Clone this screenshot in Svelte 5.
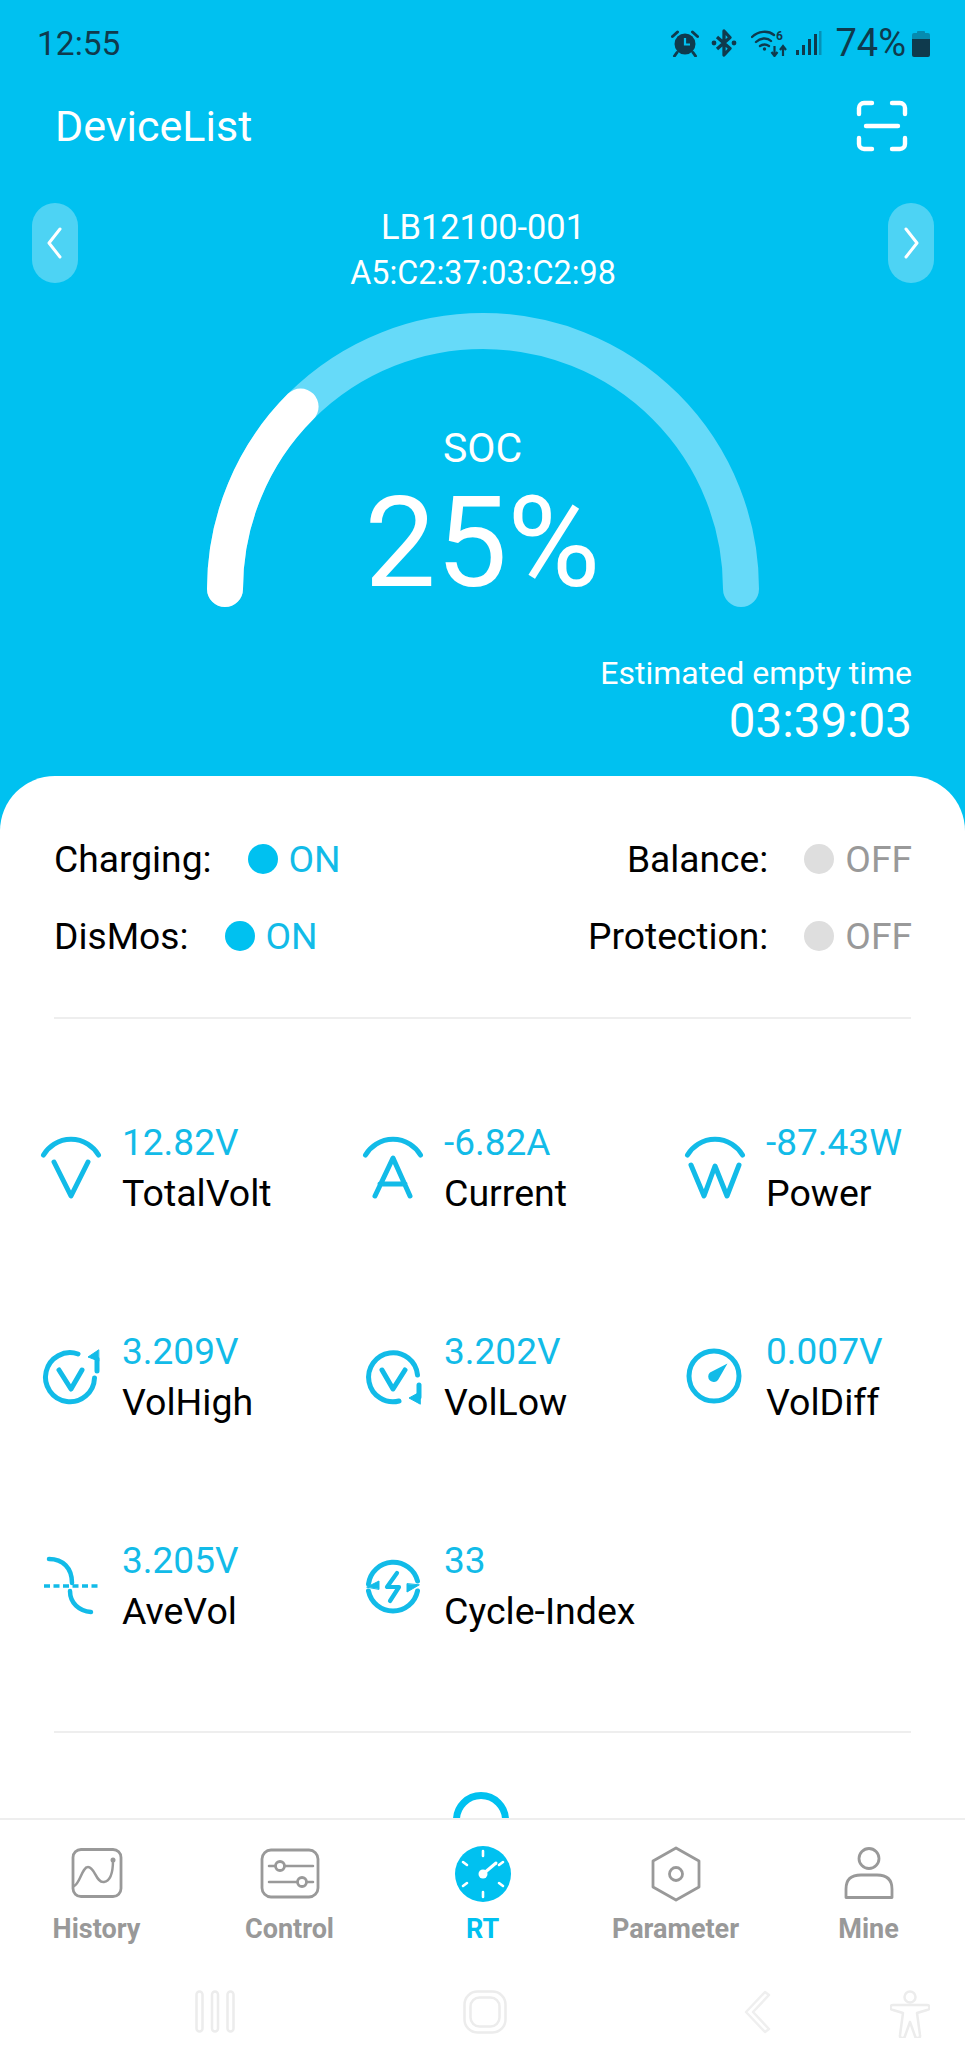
<script>
  const rows = [
    [{ k: 'v', val: '12.82V', label: 'TotalVolt' }, { k: 'a', val: '-6.82A', label: 'Current' }, { k: 'w', val: '-87.43W', label: 'Power' }],
    [{ k: 'high', val: '3.209V', label: 'VolHigh' }, { k: 'low', val: '3.202V', label: 'VolLow' }, { k: 'diff', val: '0.007V', label: 'VolDiff' }],
    [{ k: 'ave', val: '3.205V', label: 'AveVol' }, { k: 'cycle', val: '33', label: 'Cycle-Index' }]
  ];
  const flags = [
    [{ label: 'Charging:', on: true }, { label: 'Balance:', on: false }],
    [{ label: 'DisMos:', on: true }, { label: 'Protection:', on: false }]
  ];
  const tabs = [
    { k: 'history', label: 'History' },
    { k: 'control', label: 'Control' },
    { k: 'rt', label: 'RT', active: true },
    { k: 'param', label: 'Parameter' },
    { k: 'mine', label: 'Mine' }
  ];
</script>

<div class="app">
  <header class="head">
    <div class="status">
      <span class="time">12:55</span>
      <div class="sys">
        <svg class="i-alarm" width="28" height="27" viewBox="0 0 28 27">
          <circle cx="14" cy="14" r="10.5" fill="#0f3a4d"/>
          <path d="M14 8v6.5h5" fill="none" stroke="#00c1f0" stroke-width="2.2"/>
          <path d="M1.5 6.5 6.5 2M26.5 6.5 21.5 2M6 22.5 3.5 26M22 22.5 24.5 26" stroke="#0f3a4d" stroke-width="3" stroke-linecap="round"/>
        </svg>
        <svg class="i-bt" width="26" height="28" viewBox="0 0 26 28">
          <path d="M6 8 19 19.5 13 26V2l6 6.5L6 20" fill="none" stroke="#0f3a4d" stroke-width="3.300" stroke-linejoin="round"/>
          <circle cx="3" cy="14" r="2.4" fill="#0f3a4d"/><circle cx="23" cy="14" r="2.4" fill="#0f3a4d"/>
        </svg>
        <svg class="i-wifi" width="37" height="28" viewBox="0 0 37 28">
          <path d="M1 8C7 2 17 1 23 6M5 13c4-4 11-5 15-1M9 17c3-2 6-2 9 0" fill="none" stroke="#0f3a4d" stroke-width="2.4" stroke-linecap="round"/>
          <circle cx="13.500" cy="20" r="1.700" fill="#0f3a4d"/>
          <path d="M23.500 17v9M20.500 23l3 4 3-4M32 27v-9M29 21l3-4 3 4" fill="none" stroke="#0f3a4d" stroke-width="2.200"/>
          <text x="25" y="11" class="six">6</text>
        </svg>
        <svg class="i-sig" width="26" height="26" viewBox="0 0 26 26">
          <rect x="0" y="20" width="3" height="5" fill="#0f3a4d"/>
          <rect x="6" y="15" width="3" height="10" fill="#0f3a4d"/>
          <rect x="12" y="9" width="3" height="16" fill="#0f3a4d"/>
          <rect x="18" y="4" width="3" height="21" fill="#0f3a4d"/>
          <rect x="23" y="1" width="2.500" height="24" fill="#0f3a4d" opacity="0.35"/>
        </svg>
        <span class="pct">74%</span>
        <svg class="i-bat" width="18" height="28" viewBox="0 0 18 28">
          <path d="M5 3a1 1 0 0 1 1-1h6a1 1 0 0 1 1 1v1h3a2 2 0 0 1 2 2v4H0V6a2 2 0 0 1 2-2h3z" fill="#0f3a4d" opacity="0.4"/>
          <path d="M0 10h18v16a2 2 0 0 1-2 2H2a2 2 0 0 1-2-2z" fill="#0f3a4d"/>
        </svg>
      </div>
    </div>

    <div class="titlebar">
      <span class="title">DeviceList</span>
      <svg width="52" height="52" viewBox="0 0 52 52" fill="none" stroke="#fff" stroke-width="4.400" stroke-linecap="round">
        <path d="M3 14V8a5 5 0 0 1 5-5h8M36 3h8a5 5 0 0 1 5 5v6M3 38v6a5 5 0 0 0 5 5h8M36 49h8a5 5 0 0 0 5-5v-6M10 26h32"/>
      </svg>
    </div>

    <div class="device">
      <button class="pager" aria-label="Previous">
        <svg width="20" height="32" viewBox="0 0 20 32" fill="none" stroke="#fff" stroke-width="3" stroke-linecap="round" stroke-linejoin="round"><path d="M15 2 4 16l11 14"/></svg>
      </button>
      <div class="devname">
        <div class="dn">LB12100-001</div>
        <div class="mac">A5:C2:37:03:C2:98</div>
      </div>
      <button class="pager" aria-label="Next">
        <svg width="20" height="32" viewBox="0 0 20 32" fill="none" stroke="#fff" stroke-width="3" stroke-linecap="round" stroke-linejoin="round"><path d="M5 2l11 14L5 30"/></svg>
      </button>
    </div>

    <div class="gauge">
      <svg width="560" height="310" viewBox="0 0 560 310" fill="none" stroke-width="36" stroke-linecap="round">
        <path d="M22 284A258 258 0 0 1 538 284" stroke="#66daf9"/>
        <path d="M22 284A258 258 0 0 1 97.600 101.600" stroke="#fff"/>
      </svg>
      <div class="gtext">
        <div class="soc">SOC</div>
        <div class="big">25%</div>
      </div>
    </div>

    <div class="estimate">
      <div class="est1">Estimated empty time</div>
      <div class="est2">03:39:03</div>
    </div>
  </header>

  <main class="card">
    <div class="scroll">
      <section class="flags">
        {#each flags as row}
          <div class="flagrow">
            {#each row as f}
              <div class="flag">
                <span class="flabel">{f.label}</span>
                <span class="dot" class:on={f.on}></span>
                <span class="fstate" class:on={f.on}>{f.on ? 'ON' : 'OFF'}</span>
              </div>
            {/each}
          </div>
        {/each}
      </section>
      <div class="rule first"></div>
      <section class="metrics">
        {#each rows as row}
          {#each row as m}
            <div class="metric">
              <svg class="micon" width="60" height="60" viewBox="0 0 60 60" fill="none" stroke="#12bbe8" stroke-width="5" stroke-linecap="round" stroke-linejoin="round">
                {#if m.k === 'v'}
                  <path d="M2.500 17A32 32 0 0 1 57.500 17"/><path d="M13 24l17 34 17-34"/>
                {:else if m.k === 'a'}
                  <path d="M2.500 17A32 32 0 0 1 57.500 17"/><path d="M12 58 30 20l17 38M17 46h25"/>
                {:else if m.k === 'w'}
                  <path d="M2.500 17A32 32 0 0 1 57.500 17"/><path d="M6 27l13 31 11-30 12 30 12-31"/>
                {:else if m.k === 'high'}
                  <path d="M37 7A24.500 24.500 0 1 0 53.500 31"/><path d="M18 23l12 19 11-19"/><path d="M56 12v12"/>
                  <path d="M57.500 3 47 10l10.500 4z" fill="#12bbe8" stroke-width="1"/>
                {:else if m.k === 'low'}
                  <path d="M54.500 28A24.500 24.500 0 1 0 36 54"/><path d="M19 23l11 19 12-19"/><path d="M56 38v12"/>
                  <path d="M57 57 46 51l11-6z" fill="#12bbe8" stroke-width="1"/>
                {:else if m.k === 'diff'}
                  <circle cx="29" cy="29" r="25"/>
                  <path d="M42.500 16.500 33 33a5.500 5.500 0 1 1-8-7.500z" fill="#12bbe8" stroke="none"/>
                {:else if m.k === 'ave'}
                  <path d="M8 3c14 0 23 9 23 24M29 35c0 12 9 20 21 21" stroke-width="4.500"/>
                  <path d="M3 30h54" stroke-width="3.500" stroke-dasharray="6 3.500" stroke-linecap="butt"/>
                {:else if m.k === 'cycle'}
                  <path d="M5.500 28A25 25 0 0 1 54.500 25M54.500 35A25 25 0 0 1 5.500 35"/>
                  <path d="M4 31l12-6v8zM56 29l-12 7v-8z" fill="#12bbe8" stroke-width="1"/>
                  <path d="M34 17 24 31h12l-9 14" stroke-width="4.200"/>
                {/if}
              </svg>
              <div class="mtext">
                <div class="mval">{m.val}</div>
                <div class="mlabel">{m.label}</div>
              </div>
            </div>
          {/each}
        {/each}
      </section>
      <div class="rule"></div>
      <div class="peek"></div>
    </div>

    <nav class="tabs">
      {#each tabs as t}
        <div class="tab" class:active={t.active}>
          <svg width="60" height="58" viewBox="0 0 60 58" fill="none" stroke="#999" stroke-width="2.800" stroke-linecap="round" stroke-linejoin="round">
            {#if t.k === 'history'}
              <rect x="6" y="4.500" width="48" height="47" rx="8"/>
              <path d="M7 41c6-2 8-19 14-19 7 0 8 16 16 15 7-1 9-12 9-22" stroke-width="2.500"/>
              <circle cx="46" cy="15" r="2.500" fill="#999" stroke="none"/>
            {:else if t.k === 'control'}
              <rect x="2" y="5" width="56" height="47" rx="9"/>
              <path d="M9 21h44M9 37h44" stroke-width="2.500"/>
              <circle cx="20" cy="21" r="4.500" fill="#fff"/><circle cx="42" cy="37" r="4.500" fill="#fff"/>
            {:else if t.k === 'rt'}
              <circle cx="30" cy="29" r="28" fill="#00c1f0" stroke="none"/>
              <path d="M30 6v5M30 47v5M10 17l4 3M10 41l4-3M50 17l-4 3M50 41l-4-3" stroke="#fff" stroke-width="2.600"/>
              <path d="M30 29 43 18" stroke="#fff" stroke-width="3"/>
              <circle cx="30" cy="29" r="4.500" fill="#fff" stroke="none"/>
            {:else if t.k === 'param'}
              <path d="M30 3 53 16v26L30 55 7 42V16z"/>
              <circle cx="30" cy="29" r="6.500"/>
            {:else if t.k === 'mine'}
              <circle cx="30" cy="13.500" r="10"/>
              <path d="M7 52.500h46V44Q53 30 38 30H22Q7 30 7 44z"/>
            {/if}
          </svg>
          <span class="tlabel">{t.label}</span>
        </div>
      {/each}
    </nav>

    <div class="sysnav">
      <svg class="s1" width="40" height="44" viewBox="0 0 40 44" fill="none" stroke="#ececec" stroke-width="2.500">
        <rect x="1.500" y="1.500" width="6" height="40" rx="3"/><rect x="17" y="1.500" width="6" height="40" rx="3"/><rect x="32.500" y="1.500" width="6" height="40" rx="3"/>
      </svg>
      <svg class="s2" width="44" height="44" viewBox="0 0 44 44" fill="none" stroke="#ececec" stroke-width="2.500">
        <rect x="1.500" y="1.500" width="41" height="41" rx="13"/><rect x="7.500" y="7.500" width="29" height="29" rx="9"/>
      </svg>
      <svg class="s3" width="28" height="44" viewBox="0 0 28 44" fill="none" stroke="#efefef" stroke-width="2.500" stroke-linecap="round" stroke-linejoin="round">
        <path d="M22 2 3 22l19 20 4-3L10 22 26 5z"/>
      </svg>
      <svg class="s4" width="40" height="48" viewBox="0 0 40 48" fill="none" stroke="#ececec" stroke-width="2.500" stroke-linejoin="round">
        <circle cx="20" cy="7" r="5.500"/>
        <path d="M3 15h34a2.500 2.500 0 0 1 0 5l-10 3 3 22a2.500 2.500 0 0 1-5 1l-5-14-5 14a2.500 2.500 0 0 1-5-1l3-22-10-3a2.500 2.500 0 0 1 0-5z"/>
      </svg>
    </div>
  </main>
</div>

<style>
  :global(body) {
    margin: 0;
  }
  .app {
    width: 965px;
    height: 2070px;
    background: #00c1f0;
    display: flex;
    flex-direction: column;
    font-family: Roboto, "Liberation Sans", sans-serif;
    overflow: hidden;
  }
  .head {
    height: 776px;
    flex: none;
    color: #fff;
  }
  .status {
    height: 86px;
    padding: 0 35px 0 37px;
    display: flex;
    align-items: center;
    justify-content: space-between;
    color: #0f3a4d;
  }
  .time {
    font-size: 33.500px;
  }
  .sys {
    display: flex;
    align-items: center;
  }
  .i-bt { margin-left: 12px; }
  .i-wifi { margin-left: 14px; }
  .i-sig { margin-left: 8px; }
  .pct { font-size: 38px; margin-left: 13px; }
  .i-bat { margin-left: 6px; }
  .six { font-size: 12px; font-weight: 700; fill: #0f3a4d; stroke: none; }
  .titlebar {
    height: 80px;
    padding: 0 57px 0 55px;
    display: flex;
    align-items: center;
    justify-content: space-between;
  }
  .title {
    font-size: 43px;
  }
  .device {
    margin-top: 37px;
    height: 80px;
    padding: 0 31px 0 32px;
    display: flex;
    align-items: stretch;
    justify-content: space-between;
  }
  .pager {
    width: 46px;
    height: 80px;
    border: 0;
    padding: 0;
    border-radius: 23px;
    background: rgba(255, 255, 255, 0.3);
    display: flex;
    align-items: center;
    justify-content: center;
  }
  .devname {
    text-align: center;
  }
  .dn {
    font-size: 34.400px;
    line-height: 48px;
  }
  .mac {
    font-size: 32.300px;
    line-height: 44px;
  }
  .gauge {
    position: relative;
    height: 310px;
    margin-top: 22px;
    display: flex;
    justify-content: center;
  }
  .gtext {
    position: absolute;
    left: 0;
    right: 0;
    top: 118px;
    text-align: center;
  }
  .soc {
    font-size: 41px;
    line-height: 50px;
    font-weight: 400;
  }
  .big {
    font-size: 127px;
    line-height: 140px;
    font-weight: 400;
  }
  .estimate {
    padding: 36px 53px 0 0;
    text-align: right;
  }
  .est1 {
    font-size: 32px;
    line-height: 44px;
    font-weight: 400;
  }
  .est2 {
    font-size: 47.500px;
    line-height: 52px;
  }
  .card {
    flex: 1;
    min-height: 0;
    background: #fff;
    border-radius: 55px 55px 0 0;
    display: flex;
    flex-direction: column;
  }
  .scroll {
    height: 1042px;
    flex: none;
    overflow: hidden;
  }
  .flags {
    padding: 61px 53px 0 54px;
  }
  .flagrow {
    height: 44px;
    margin-bottom: 33px;
    display: flex;
    justify-content: space-between;
  }
  .flag {
    display: flex;
    align-items: center;
    font-size: 37.200px;
    line-height: 44px;
    color: #000;
  }
  .dot {
    width: 30px;
    height: 30px;
    border-radius: 50%;
    background: #dedede;
    margin: 0 11px 0 36px;
  }
  .dot.on {
    background: #00c1f0;
  }
  .fstate {
    color: #999;
  }
  .fstate.on {
    color: #12bbe8;
  }
  .rule {
    height: 2px;
    margin: 27px 54px 0;
    background: #eee;
  }
  .rule.first {
    margin-top: 59px;
  }
  .metrics {
    display: grid;
    grid-template-columns: repeat(3, 322px);
    grid-auto-rows: 209px;
    padding: 44px 0 14px 41px;
  }
  .metric {
    display: flex;
    align-items: center;
    gap: 21px;
  }
  .micon {
    overflow: visible;
  }
  .mtext {
    font-size: 37.500px;
    line-height: 50px;
  }
  .mval {
    font-size: 37px;
    color: #12bbe8;
  }
  .mlabel {
    color: #000;
  }
  .peek {
    width: 56px;
    height: 56px;
    box-sizing: border-box;
    margin: 59px 0 0 453px;
    border: 7px solid #00c1f0;
    border-radius: 50%;
  }
  .tabs {
    border-top: 2px solid #eee;
    height: 170px;
    box-sizing: border-box;
    display: grid;
    grid-template-columns: repeat(5, 193px);
    padding-top: 25px;
    flex: none;
  }
  .tab {
    display: flex;
    flex-direction: column;
    align-items: center;
  }
  .tlabel {
    font-size: 27px;
    font-weight: 700;
    line-height: 34px;
    margin-top: 9px;
    color: #999;
  }
  .active .tlabel {
    color: #00c1f0;
  }
  .sysnav {
    display: flex;
    align-items: flex-start;
    padding: 2px 0 0 195px;
  }
  .s2 { margin-left: 228px; }
  .s3 { margin-left: 236px; }
  .s4 { margin-left: 119px; }
</style>
